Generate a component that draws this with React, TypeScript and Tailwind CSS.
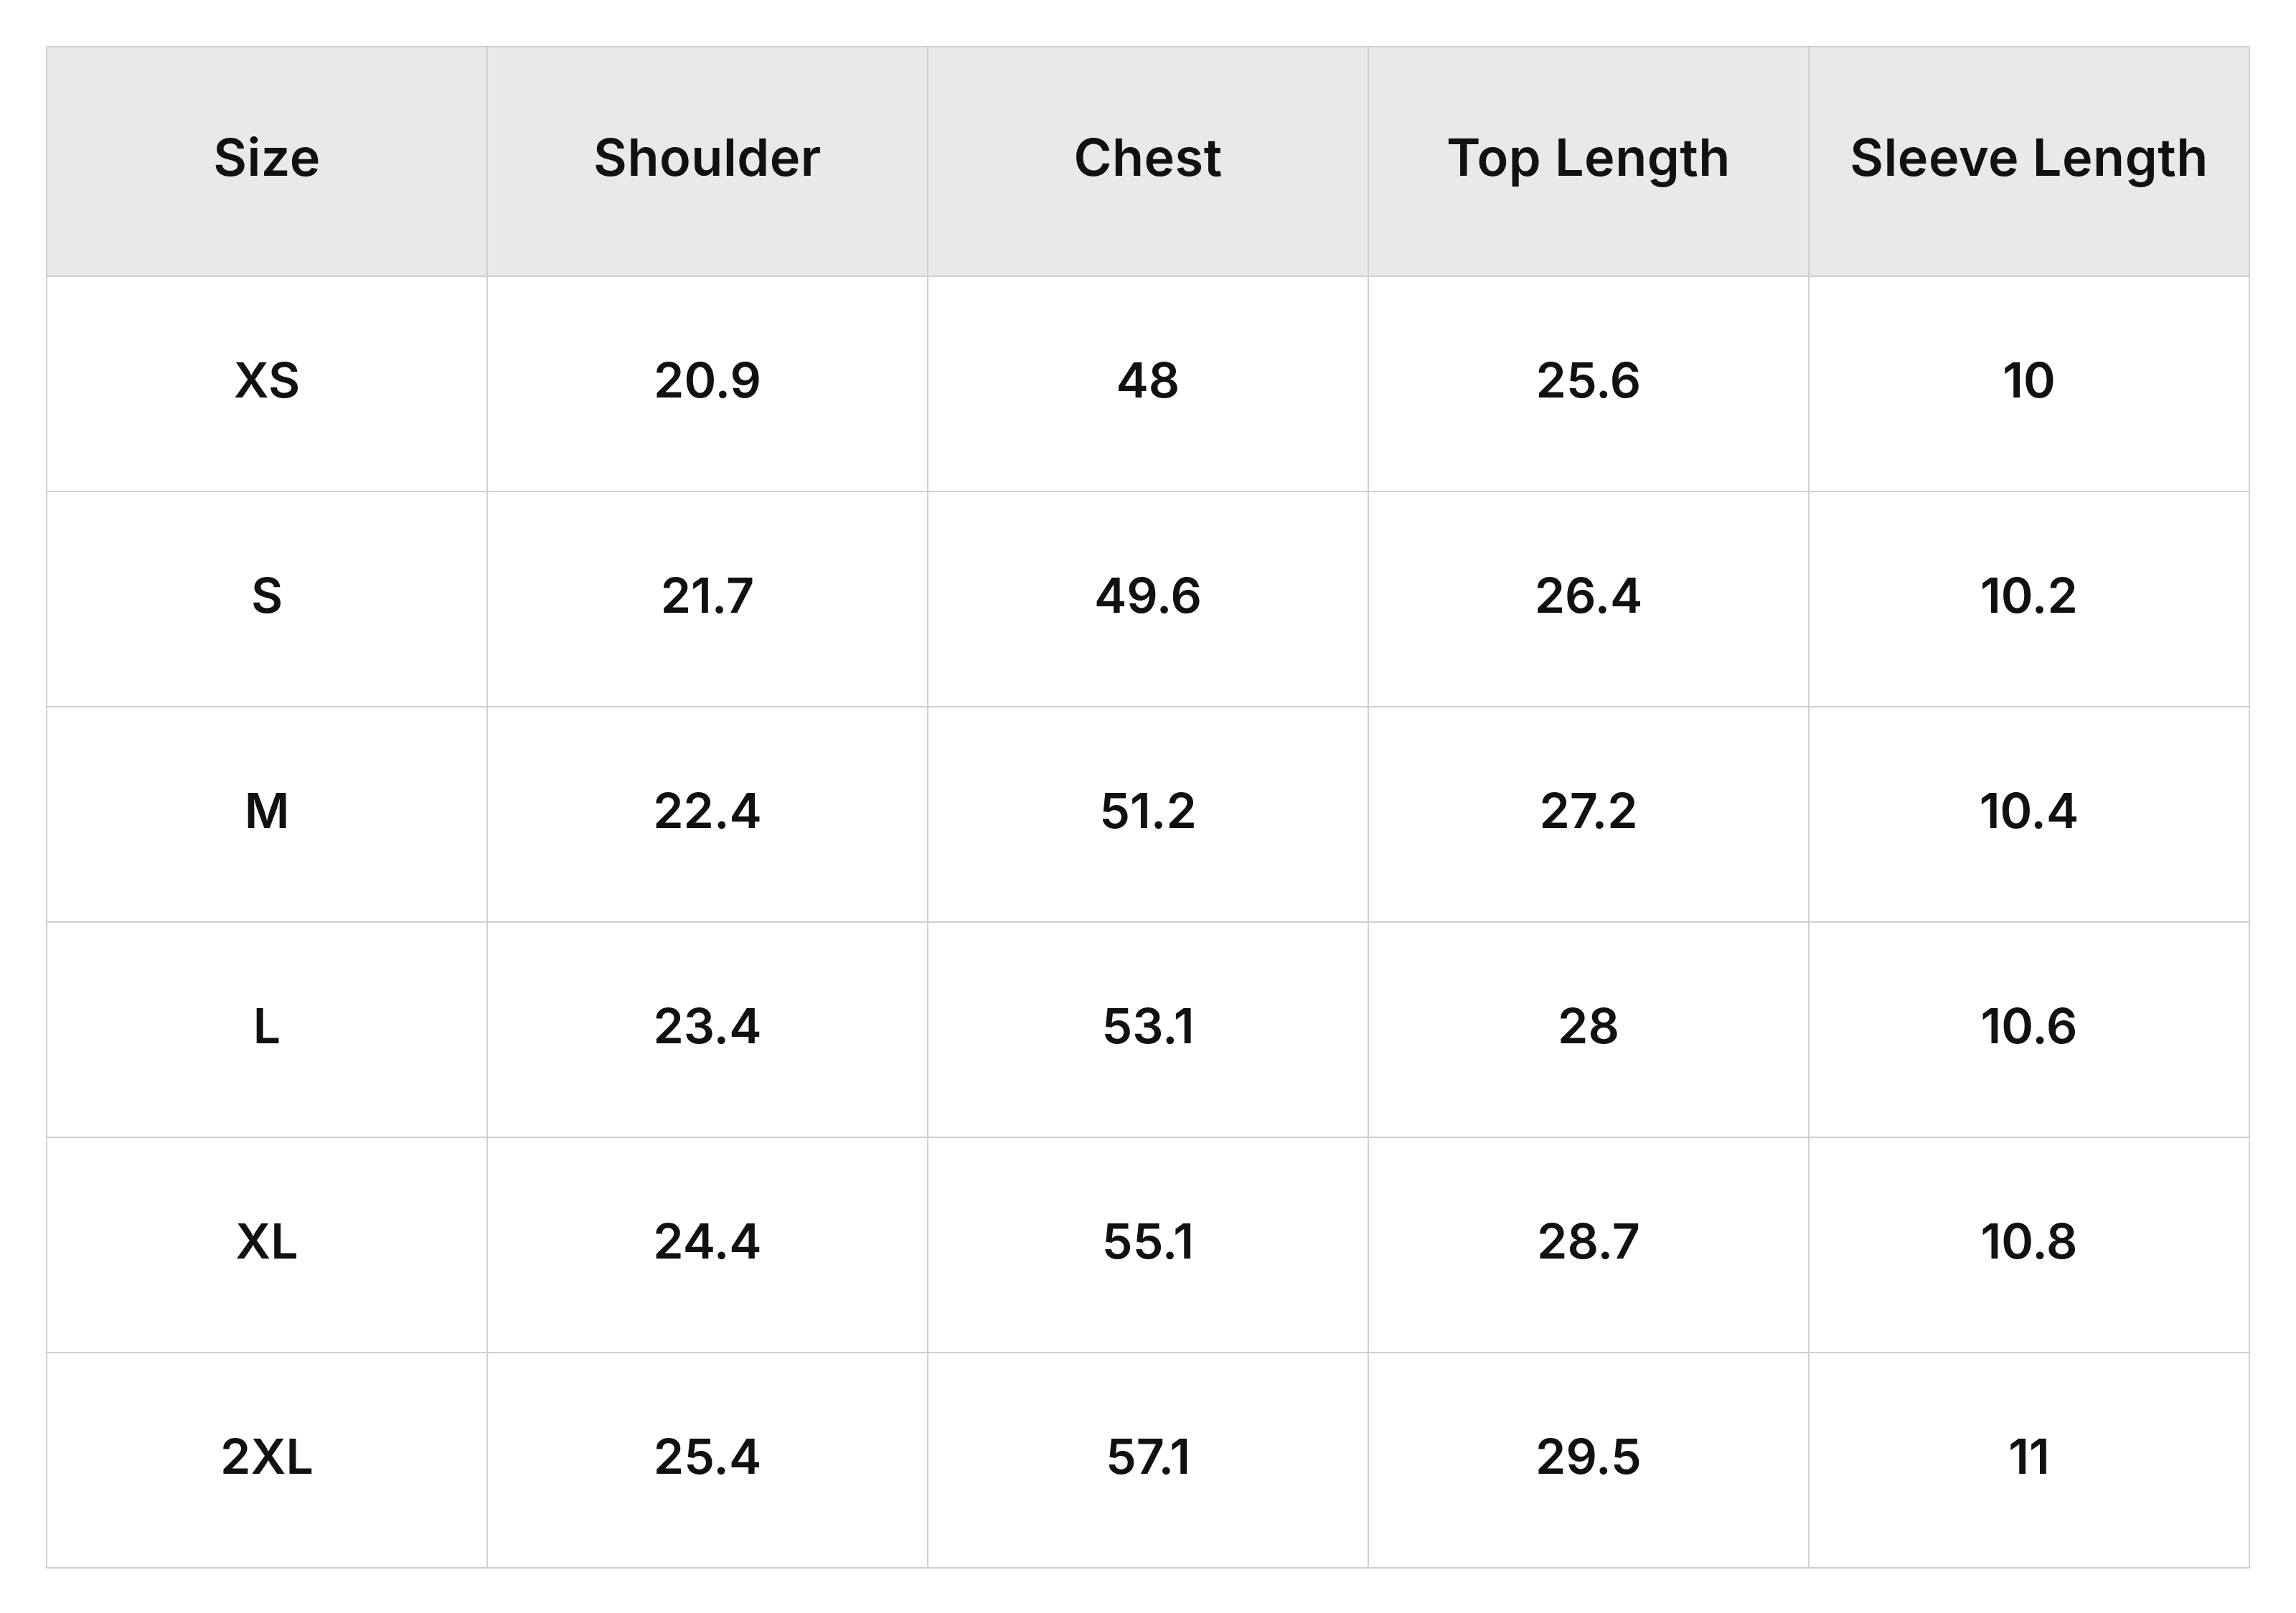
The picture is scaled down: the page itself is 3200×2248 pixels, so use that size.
const headers = ["Size", "Shoulder", "Chest", "Top Length", "Sleeve Length"];

const rows = [
  ["XS", "20.9", "48", "25.6", "10"],
  ["S", "21.7", "49.6", "26.4", "10.2"],
  ["M", "22.4", "51.2", "27.2", "10.4"],
  ["L", "23.4", "53.1", "28", "10.6"],
  ["XL", "24.4", "55.1", "28.7", "10.8"],
  ["2XL", "25.4", "57.1", "29.5", "11"],
];

export default function App() {
  return (
    <div className="min-h-screen bg-white px-[64px] py-[64px] font-['Inter',sans-serif] text-[#111111]">
      <table className="w-full table-fixed border-collapse">
        <thead>
          <tr className="h-[320px] bg-[#e9e9e9]">
            {headers.map((h) => (
              <th
                key={h}
                className="border-2 border-[#d0d0d0] pb-[12px] text-center text-[72px] font-semibold tracking-[0.5px]"
              >
                {h}
              </th>
            ))}
          </tr>
        </thead>
        <tbody>
          {rows.map((row) => (
            <tr key={row[0]} className="h-[300px]">
              {row.map((cell, i) => (
                <td
                  key={i}
                  className="border-2 border-[#d0d0d0] pb-[12px] text-center text-[68px] font-semibold"
                >
                  {cell}
                </td>
              ))}
            </tr>
          ))}
        </tbody>
      </table>
    </div>
  );
}
